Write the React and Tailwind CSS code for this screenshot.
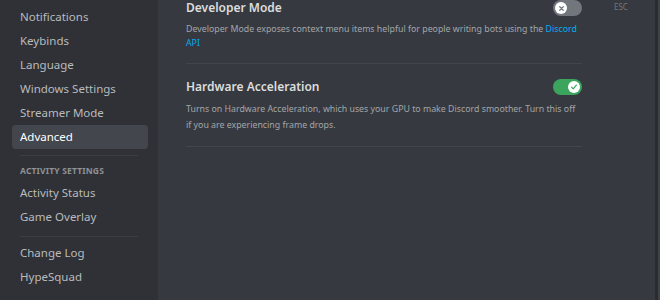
import React from "react";

const font = { fontFamily: '"Noto Sans", "Open Sans", sans-serif' };

const NavItem = ({ label, active }) => (
  <div
    className={`h-6 ml-[12px] mr-[10px] px-[8px] flex items-center rounded text-[11.5px] ${
      active ? "bg-[#43464d] text-white" : "text-[#b9bbbe]"
    }`}
  >
    {label}
  </div>
);

const Toggle = ({ on }) => (
  <div
    className={`w-[29px] h-[16px] rounded-full flex items-center px-[2px] ${
      on ? "bg-[#3ba55d] justify-end" : "bg-[#72767d] justify-start"
    }`}
  >
    <div className="w-[12px] h-[12px] rounded-full bg-white flex items-center justify-center">
      {on ? (
        <svg width="8" height="8" viewBox="0 0 20 20">
          <path d="M4 10.5l4 4 8-9" fill="none" stroke="#3ba55d" strokeWidth="3" strokeLinecap="round" strokeLinejoin="round" />
        </svg>
      ) : (
        <svg width="7" height="7" viewBox="0 0 20 20">
          <path d="M5 5l10 10M15 5L5 15" fill="none" stroke="#72767d" strokeWidth="3.5" strokeLinecap="round" />
        </svg>
      )}
    </div>
  </div>
);

const Setting = ({ title, on, pb, lh, children }) => (
  <div className={`border-b border-[#42454b] ${pb}`}>
    <div className="flex items-center justify-between h-[16px]">
      <div className="text-[12px] font-semibold text-[#dcddde]">{title}</div>
      <Toggle on={on} />
    </div>
    <div className={`mt-[6px] text-[8.8px] text-[#a3a6aa] pr-[4px] ${lh}`}>{children}</div>
  </div>
);

export default function App() {
  return (
    <div className="w-[660px] h-[300px] flex overflow-hidden bg-[#36393f]" style={font}>
      <div className="w-[158px] h-full bg-[#2f3136] pt-[5px] shrink-0">
        <NavItem label="Notifications" />
        <NavItem label="Keybinds" />
        <NavItem label="Language" />
        <NavItem label="Windows Settings" />
        <NavItem label="Streamer Mode" />
        <NavItem label="Advanced" active />
        <div className="mx-[20px] mt-[6px] border-t border-[#3b3e44]" />
        <div className="mx-[20px] mt-[10px] h-[10px] flex items-center text-[8.5px] font-bold text-[#8e9297] tracking-[0.02em]">
          ACTIVITY SETTINGS
        </div>
        <div className="h-[5px]" />
        <NavItem label="Activity Status" />
        <NavItem label="Game Overlay" />
        <div className="mx-[20px] mt-[7px] border-t border-[#3b3e44]" />
        <div className="h-[4px]" />
        <NavItem label="Change Log" />
        <NavItem label="HypeSquad" />
      </div>
      <div className="flex-1 flex">
        <div className="w-[396px] ml-[28px]">
          <Setting title="Developer Mode" on={false} pb="pb-[13px]" lh="leading-[14px]">
            Developer Mode exposes context menu items helpful for people writing bots using the{" "}
            <span className="text-[#00aff4]">Discord API</span>
          </Setting>
          <div className="h-[15px]" />
          <Setting title="Hardware Acceleration" on pb="pb-[13px]" lh="leading-[16px]">
            Turns on Hardware Acceleration, which uses your GPU to make Discord smoother. Turn this off if
            you are experiencing frame drops.
          </Setting>
        </div>
        <div className="ml-[32px] pt-[1px] text-[8px] text-[#72767d]">ESC</div>
        <div className="flex-1" />
        <div className="w-[3px] bg-[#2a2c30]" />
        <div className="w-[2px] bg-[#3f4247]" />
      </div>
    </div>
  );
}
